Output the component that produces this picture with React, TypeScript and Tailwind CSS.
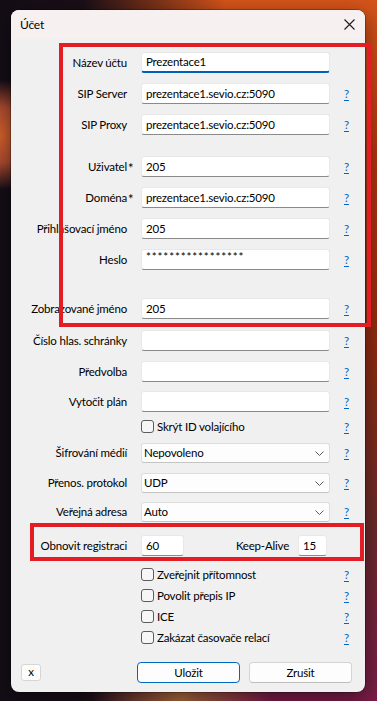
import { ReactNode } from "react";

type Row = {
  label: string;
  value?: string;
  mt: string;
  star?: boolean;
  help?: boolean;
  focus?: boolean;
  kind?: "input" | "select" | "check";
};

const rows: Row[] = [
  { label: "Název účtu", value: "Prezentace1", mt: "mt-[13px]", help: false, focus: true },
  { label: "SIP Server", value: "prezentace1.sevio.cz:5090", mt: "mt-[10px]" },
  { label: "SIP Proxy", value: "prezentace1.sevio.cz:5090", mt: "mt-[10px]" },
  { label: "Uživatel", value: "205", mt: "mt-[21px]", star: true },
  { label: "Doména", value: "prezentace1.sevio.cz:5090", mt: "mt-[10px]", star: true },
  { label: "Přihlašovací jméno", value: "205", mt: "mt-[10px]" },
  { label: "Heslo", value: "*****************", mt: "mt-[10px]" },
  { label: "Zobrazované jméno", value: "205", mt: "mt-[28px]" },
  { label: "Číslo hlas. schránky", value: "", mt: "mt-[11px]" },
  { label: "Předvolba", value: "", mt: "mt-[10px]" },
  { label: "Vytočit plán", value: "", mt: "mt-[9px]" },
  { label: "Skrýt ID volajícího", mt: "mt-[4px]", kind: "check" },
  { label: "Šifrování médií", value: "Nepovoleno", mt: "mt-[6px]", kind: "select" },
  { label: "Přenos. protokol", value: "UDP", mt: "mt-[10px]", kind: "select" },
  { label: "Veřejná adresa", value: "Auto", mt: "mt-[9px]", kind: "select" },
];

const checks = ["Zveřejnit přítomnost", "Povolit přepis IP", "ICE", "Zakázat časovače relací"];

const Help = () => (
  <span className="ml-[14px] text-[#0063c6] underline underline-offset-[2px]">?</span>
);

const Box = () => (
  <span className="w-[13px] h-[13px] rounded-[3px] border border-[#5c5c5c] bg-[#f6f6f6] shrink-0" />
);

const Chevron = () => (
  <svg width="9" height="5" viewBox="0 0 9 5" className="ml-auto mr-[5px]">
    <path d="M0.5 0.5 L4.5 4.5 L8.5 0.5" fill="none" stroke="#5a5a5a" strokeWidth="1" />
  </svg>
);

function Field({ r }: { r: Row }) {
  if (r.kind === "check") {
    return (
      <div className={`${r.mt} flex items-center h-[21px]`}>
        <div className="w-[189px] ml-[130px] flex items-center gap-[3px]">
          <Box />
          <span>{r.label}</span>
        </div>
        <Help />
      </div>
    );
  }
  let control: ReactNode;
  if (r.kind === "select") {
    control = (
      <div className="w-[189px] h-[20px] bg-[#fdfdfd] border border-[#dedede] border-b-[#c4c4c4] rounded-[3px] pl-[2px] flex items-center">
        <span>{r.value}</span>
        <Chevron />
      </div>
    );
  } else {
    control = (
      <div
        className={
          r.focus
            ? "w-[189px] h-[21px] bg-white border border-[#e8e8e8] border-b-2 border-b-[#005fb8] rounded-[3px] pl-[4px] flex items-center"
            : "w-[189px] h-[21px] bg-white border border-[#e8e8e8] border-b-[#8a8a8a] rounded-[3px] pl-[4px] flex items-center"
        }
      >
        <span className={r.label === "Heslo" ? "tracking-[0.9px] -mt-[5px]" : ""}>{r.value}</span>
      </div>
    );
  }
  return (
    <div className={`${r.mt} flex items-center`}>
      <div className="w-[116px] text-right relative">
        {r.label}
        {r.star && <span className="absolute left-full ml-[1px] top-[1px] text-[13px]">*</span>}
      </div>
      <div className="ml-[14px]">{control}</div>
      {r.help !== false && <Help />}
    </div>
  );
}

export default function App() {
  return (
    <div className="relative w-[377px] h-[701px] overflow-hidden pt-[10px] pl-[11px] font-[Lato,sans-serif] text-[11.5px] tracking-[-0.2px] text-black bg-[radial-gradient(circle_at_0px_135px,#d0602a_0px,#a84a30_28px,transparent_55px),radial-gradient(ellipse_at_48%_100%,#a8683a_0%,transparent_32%),linear-gradient(90deg,#140d16_0%,#1a0e17_22%,transparent_60%),linear-gradient(180deg,#d4541a_0%,#a8320f_22%,#8c2a12_50%,#6a2a2a_75%,#7a1c48_100%)]">
      <div className="w-[354px] h-[682px] rounded-[8px] bg-[#f0f0f0] overflow-hidden flex flex-col shadow-[0_0_0_1px_rgba(0,0,0,0.25),0_6px_20px_rgba(0,0,0,0.45)]">
        {/* title bar */}
        <div className="h-[29px] shrink-0 bg-[#f7f0f1] flex items-center justify-between pl-[9px] pr-[10px]">
          <span className="text-[12px]">Účet</span>
          <svg width="11" height="11" viewBox="0 0 11 11">
            <path d="M0.5 0.5 L10.5 10.5 M10.5 0.5 L0.5 10.5" stroke="#1c1c1c" strokeWidth="1.1" />
          </svg>
        </div>

        <div className="flex flex-col">
          {rows.map((r) => (
            <Field key={r.label} r={r} />
          ))}

          {/* registration / keep-alive */}
          <div className="mt-[13px] flex items-center">
            <div className="w-[116px] text-right">Obnovit registraci</div>
            <div className="ml-[14px] w-[43px] h-[21px] bg-white border border-[#e8e8e8] border-b-[#8a8a8a] rounded-[3px] pl-[4px] flex items-center">
              60
            </div>
            <div className="w-[105px] text-right">Keep-Alive</div>
            <div className="ml-[9px] w-[29px] h-[21px] bg-white border border-[#e8e8e8] border-b-[#8a8a8a] rounded-[3px] pl-[4px] flex items-center">
              15
            </div>
          </div>

          <div className="mt-[8px] flex flex-col">
            {checks.map((c) => (
              <div key={c} className="flex items-center h-[21px]">
                <div className="w-[189px] ml-[130px] flex items-center gap-[3px]">
                  <Box />
                  <span>{c}</span>
                </div>
                <Help />
              </div>
            ))}
          </div>

          {/* buttons */}
          <div className="mt-[14px] flex items-center">
            <button className="ml-[10px] w-[20px] h-[17px] bg-[#fdfdfd] border border-[#d6d6d6] rounded-[3px] flex items-center justify-center leading-none pb-[1px]">
              x
            </button>
            <button className="ml-[96px] w-[103px] h-[21px] bg-[#fdfdfd] border border-[#0067c0] rounded-[4px] flex items-center justify-center">
              Uložit
            </button>
            <button className="ml-[9px] w-[103px] h-[21px] bg-[#fdfdfd] border border-[#d4d4d4] border-b-[#bdbdbd] rounded-[4px] flex items-center justify-center">
              Zrušit
            </button>
          </div>
        </div>
      </div>

      {/* annotation frames */}
      <div className="absolute left-[59px] top-[43px] w-[312px] h-[284px] border-[4px] border-[#e41d25]" />
      <div className="absolute left-[30px] top-[523px] w-[334px] h-[38px] border-[4px] border-[#e41d25]" />
    </div>
  );
}
